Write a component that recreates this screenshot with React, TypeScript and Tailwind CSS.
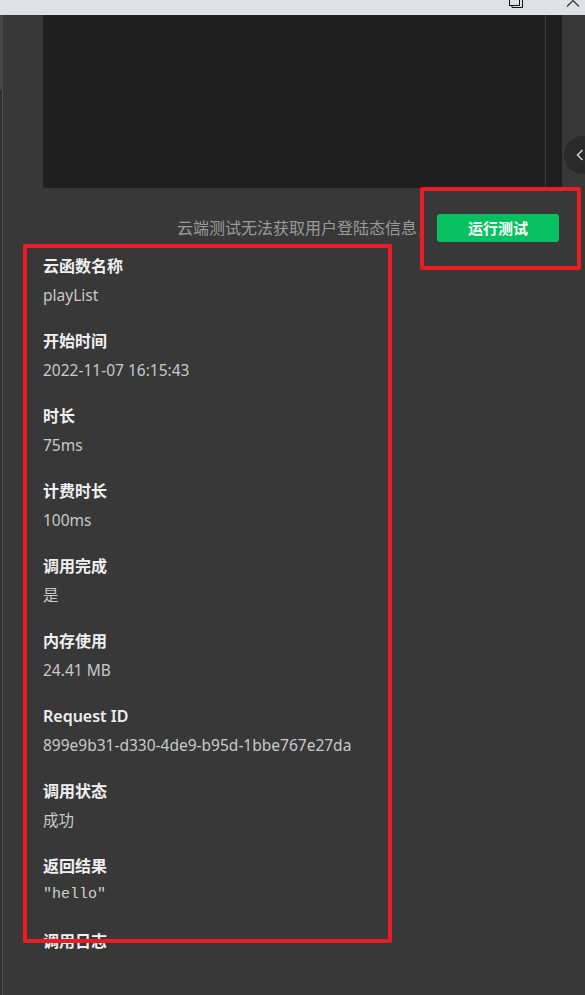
import React from "react";

type Item = {
  label: string;
  value: string;
  mono?: boolean;
};

const items: Item[] = [
  { label: "云函数名称", value: "playList" },
  { label: "开始时间", value: "2022-11-07 16:15:43" },
  { label: "时长", value: "75ms" },
  { label: "计费时长", value: "100ms" },
  { label: "调用完成", value: "是" },
  { label: "内存使用", value: "24.41 MB" },
  { label: "Request ID", value: "899e9b31-d330-4de9-b95d-1bbe767e27da" },
  { label: "调用状态", value: "成功" },
  { label: "返回结果", value: '"hello"', mono: true },
  { label: "调用日志", value: "" },
];

const App: React.FC = () => {
  return (
    <div
      className="relative w-[585px] h-[995px] overflow-hidden bg-[#383838] flex flex-col"
      style={{ fontFamily: '"Noto Sans", "Noto Sans CJK SC", sans-serif' }}
    >
      {/* window title strip */}
      <div className="relative h-[15px] shrink-0 bg-[#dee1e6]">
        <svg className="absolute left-[508px] top-0" width="16" height="8" viewBox="0 0 16 8">
          <rect x="1.5" y="-4.5" width="10" height="10" fill="none" stroke="#111" strokeWidth="1" />
          <path d="M4 5.5 V7.5 H14.5 V-2" fill="none" stroke="#111" strokeWidth="1" />
        </svg>
        <svg className="absolute left-[566px] top-0" width="14" height="8" viewBox="0 0 14 8">
          <path d="M1 6.5 L7 0.5 L13 6.5" fill="none" stroke="#333" strokeWidth="1.2" />
        </svg>
      </div>

      <div className="flex flex-1">
        {/* left edge strip */}
        <div className="w-[3px] flex flex-col">
          <div className="h-[75px] bg-[#474747]" />
          <div className="flex-1 border-r border-[#525252] bg-[#303030]" />
        </div>

        <div className="flex-1 flex flex-col pl-[40px]">
          {/* console preview */}
          <div className="w-[519px] h-[173px] bg-[#1f1f1f] flex">
            <div className="flex-1" />
            <div className="w-[17px] border-l border-[#3d3d3d]" />
          </div>

          {/* test row */}
          <div className="mt-[26px] h-[28px] flex items-center justify-end pr-[26px] gap-[4px]">
            <span className="text-[16px] text-[#9a9a9a]">云端测试无法获取用户登陆态信息，</span>
            <button className="w-[122px] h-[28px] rounded-[3px] bg-[#07c160] text-white text-[15px] font-semibold">
              运行测试
            </button>
          </div>

          {/* result list */}
          <div className="mt-[12px] flex flex-col">
            {items.map((item) => (
              <div key={item.label} className="h-[75px] flex flex-col">
                <div className="h-[24px] leading-[24px] text-[16px] font-semibold text-[#f0f0f0]">
                  {item.label}
                </div>
                <div
                  className={
                    item.mono
                      ? "mt-[5px] h-[24px] leading-[24px] text-[15px] text-[#cfcfcf]"
                      : "mt-[5px] h-[24px] leading-[24px] text-[15.5px] text-[#c9c9c9]"
                  }
                  style={item.mono ? { fontFamily: '"Liberation Mono", monospace' } : undefined}
                >
                  {item.value}
                </div>
              </div>
            ))}
          </div>
        </div>
      </div>

      {/* collapse handle */}
      <div className="absolute left-[564px] top-[136px] w-[38px] h-[38px] rounded-full bg-[#2a2a2a] flex items-center pl-[12px]">
        <svg width="8" height="12" viewBox="0 0 8 12">
          <path d="M6.5 1 L1.5 6 L6.5 11" fill="none" stroke="#cfcfcf" strokeWidth="1.5" />
        </svg>
      </div>

      {/* annotation boxes */}
      <div className="absolute left-[420px] top-[187px] w-[161px] h-[83px] border-4 border-[#ec1c24] rounded-[2px]" />
      <div className="absolute left-[23px] top-[244px] w-[369px] h-[699px] border-4 border-[#ec1c24] rounded-[2px]" />
    </div>
  );
};

export default App;
